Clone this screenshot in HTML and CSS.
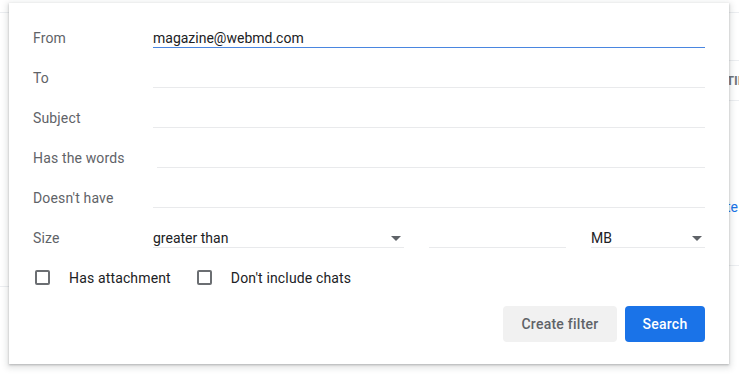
FILE: index.html
```html
<!DOCTYPE html>
<html lang="en">

<head>
  <meta charset="UTF-8">
  <meta name="viewport" content="width=device-width, initial-scale=1.0">
  <title>Search options</title>
  <link rel="stylesheet" href="styles.css">
</head>

<body>
  <div class="page">
    <div class="side side-left">
      <div class="strip strip-top"></div>
      <div class="strip strip-left-mid"></div>
    </div>
    <div class="main"></div>
    <div class="side side-right">
      <div class="strip strip-top"></div>
      <div class="strip strip-r2"></div>
      <div class="strip strip-r3"><span class="peek peek-gray">TIN</span></div>
      <div class="strip strip-r4"><span class="peek peek-blue">te</span></div>
    </div>

    <!-- search options dropdown -->
    <div class="panel">
      <div class="row">
        <label class="label">From</label>
        <div class="field field-active">magazine@webmd.com</div>
      </div>
      <div class="row">
        <label class="label">To</label>
        <div class="field"></div>
      </div>
      <div class="row">
        <label class="label">Subject</label>
        <div class="field"></div>
      </div>
      <div class="row">
        <label class="label">Has the words</label>
        <div class="field field-wide-label"></div>
      </div>
      <div class="row">
        <label class="label">Doesn't have</label>
        <div class="field"></div>
      </div>
      <div class="row">
        <label class="label">Size</label>
        <div class="size-group">
          <div class="select select-op">greater than<span class="arrow"></span></div>
          <div class="field field-size"></div>
          <div class="select select-unit">MB<span class="arrow"></span></div>
        </div>
      </div>
      <div class="row row-checks">
        <label class="check"><span class="box"></span>Has attachment</label>
        <label class="check"><span class="box"></span>Don't include chats</label>
      </div>
      <div class="actions">
        <button class="btn btn-filter">Create filter</button>
        <button class="btn btn-search">Search</button>
      </div>
    </div>
  </div>
</body>

</html>
```

FILE: styles.css
```css
* {
  box-sizing: border-box;
  margin: 0;
  padding: 0;
}

body {
  background: #fff;
  font-family: Roboto, "Liberation Sans", sans-serif;
  font-size: 14px;
  color: #202124;
  overflow: hidden;
}

.page {
  position: relative;
  display: flex;
  width: 739px;
  height: 375px;
}

.side-left {
  width: 9px;
}

.main {
  flex: 1;
}

.side-right {
  width: 10px;
  overflow: hidden;
}

.strip {
  border-bottom: 1px solid #eceef1;
}

.strip-top {
  height: 13px;
}

.strip-left-mid {
  height: 274px;
}

.strip-r2 {
  height: 48px;
}

.strip-r3 {
  height: 40px;
  display: flex;
  align-items: center;
}

.strip-r4 {
  height: 165px;
  padding-top: 96px;
}

.peek {
  display: block;
  margin-left: -3px;
  white-space: nowrap;
  line-height: 20px;
}

.peek-gray {
  color: #70757a;
  font-weight: 700;
  font-size: 13px;
}

.peek-blue {
  color: #1a73e8;
}

.panel {
  position: absolute;
  left: 9px;
  top: 3px;
  width: 720px;
  height: 361px;
  background: #fff;
  padding: 5px 24px 0 24px;
  box-shadow: 0 1px 2px 0 rgba(60, 64, 67, 0.3), 0 2px 6px 2px rgba(60, 64, 67, 0.15);
}

.row {
  display: flex;
  align-items: flex-end;
  height: 40px;
}

.label {
  width: 120px;
  flex-shrink: 0;
  line-height: 20px;
  color: #5f6368;
  letter-spacing: 0.15px;
}

.field {
  flex: 1;
  height: 20px;
  line-height: 20px;
  border-bottom: 1px solid #e9eaec;
  color: #202124;
}

.field-active {
  border-bottom-color: #4a86e0;
}

.field-wide-label {
  margin-left: 4px;
}

.size-group {
  flex: 1;
  display: flex;
  gap: 25px;
}

.select {
  position: relative;
  height: 20px;
  line-height: 20px;
  border-bottom: 1px solid #e9eaec;
}

.select-op {
  width: 251px;
}

.select-unit {
  width: 114px;
}

.field-size {
  flex: 1;
}

.arrow {
  position: absolute;
  right: 3px;
  top: 8px;
  border-left: 5px solid transparent;
  border-right: 5px solid transparent;
  border-top: 5px solid #5f6368;
}

.row-checks {
  align-items: center;
  height: 40px;
  padding-top: 19px;
  padding-left: 2px;
}

.check {
  display: flex;
  align-items: center;
  line-height: 20px;
  margin-right: 26px;
  letter-spacing: 0.15px;
}

.box {
  width: 15px;
  height: 15px;
  border: 2px solid #6b6e72;
  border-radius: 2px;
  margin-right: 19px;
}

.actions {
  display: flex;
  justify-content: flex-end;
  gap: 8px;
  margin-top: 18px;
}

.btn {
  height: 36px;
  border: none;
  border-radius: 4px;
  font-family: Roboto, "Liberation Sans", sans-serif;
  font-size: 14px;
  font-weight: 500;
  letter-spacing: 0.25px;
}

.btn-filter {
  width: 114px;
  background: #f1f1f1;
  color: #5f6368;
}

.btn-search {
  width: 80px;
  background: #1a73e8;
  color: #fff;
}
```
